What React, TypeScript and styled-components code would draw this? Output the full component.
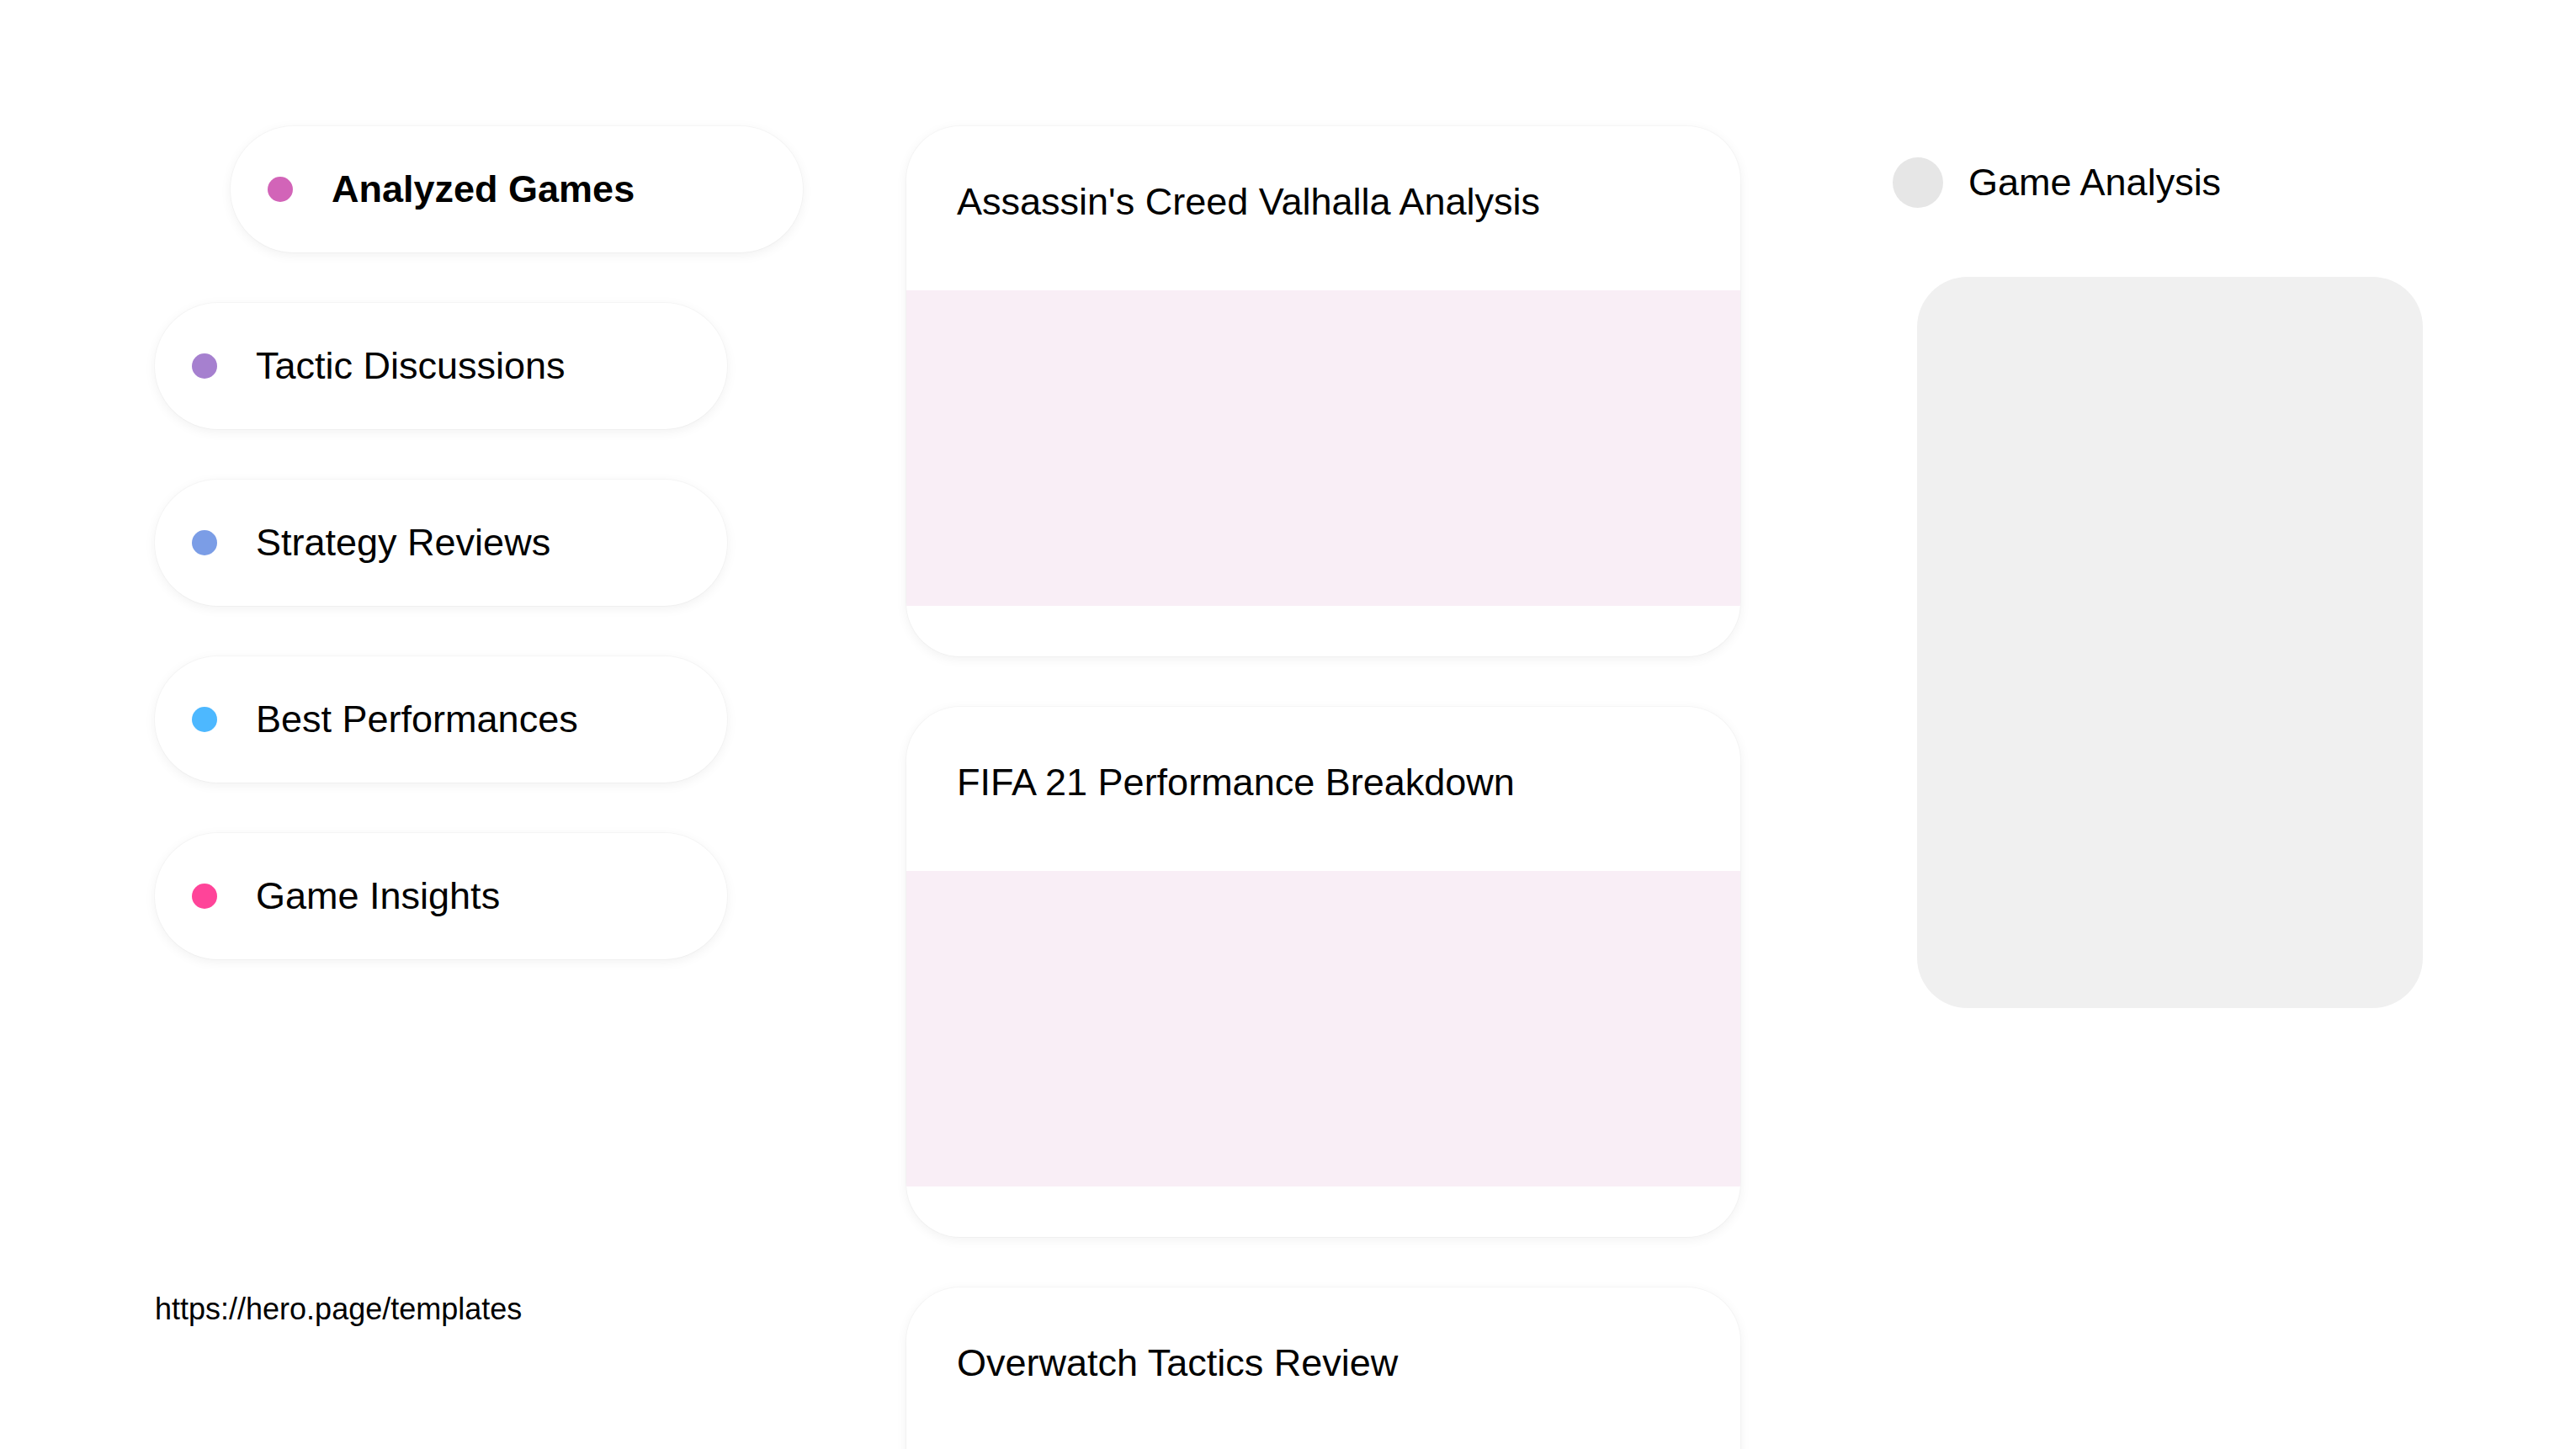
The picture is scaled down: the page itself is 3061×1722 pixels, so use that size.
import React from 'react';
import styled, { createGlobalStyle } from 'styled-components';

const GlobalStyle = createGlobalStyle`
    html, body {
        margin: 0;
        padding: 0;
        background: #ffffff;
        overflow: hidden;
    }
    body {
        font-family: 'Liberation Sans', Arial, sans-serif;
        color: #000;
    }
`;

interface NavItem {
    label: string;
    color: string;
    active?: boolean;
}

const navItems: Array<NavItem> = [
    { label: 'Analyzed Games', color: '#d264b8', active: true },
    { label: 'Tactic Discussions', color: '#a680cf' },
    { label: 'Strategy Reviews', color: '#7b9de6' },
    { label: 'Best Performances', color: '#4db8ff' },
    { label: 'Game Insights', color: '#ff4499' },
];

const cards = ['Assassin\'s Creed Valhalla Analysis', 'FIFA 21 Performance Breakdown', 'Overwatch Tactics Review'];

const Page = styled.div`
    width: 3061px;
    height: 1722px;
    display: flex;
    align-items: flex-start;
    padding: 150px 0 0 184px;
    box-sizing: border-box;
    overflow: hidden;
`;

const LeftColumn = styled.nav`
    width: 680px;
    margin-right: 213px;
    display: flex;
    flex-direction: column;
    gap: 60px;
`;

const Pill = styled.div<{ active?: boolean }>`
    height: 150px;
    width: 680px;
    box-sizing: border-box;
    margin-left: ${({ active }) => (active ? '90px' : '0')};
    display: flex;
    align-items: center;
    gap: 46px;
    padding-left: 44px;
    background: #fff;
    border-radius: 75px;
    box-shadow: 0 3px 14px rgba(0, 0, 0, 0.06), 0 0 0 1px rgba(0, 0, 0, 0.025);
    font-size: 45px;
    font-weight: ${({ active }) => (active ? 700 : 400)};
`;

const Dot = styled.span<{ color: string }>`
    width: 30px;
    height: 30px;
    border-radius: 50%;
    flex-shrink: 0;
    background: ${({ color }) => color};
`;

const FooterLink = styled.div`
    margin-top: 335px;
    font-size: 36px;
`;

const MiddleColumn = styled.main`
    width: 991px;
    margin-right: 181px;
    display: flex;
    flex-direction: column;
    gap: 60px;
`;

const Card = styled.article`
    height: 630px;
    flex-shrink: 0;
    display: flex;
    flex-direction: column;
    background: #fff;
    border-radius: 64px;
    overflow: hidden;
    box-shadow: 0 3px 14px rgba(0, 0, 0, 0.06), 0 0 0 1px rgba(0, 0, 0, 0.025);
`;

const CardHeader = styled.div`
    height: 195px;
    box-sizing: border-box;
    padding: 64px 60px 0;
    font-size: 45px;
`;

const CardMedia = styled.div`
    height: 375px;
    background: #f9eef6;
`;

const RightColumn = styled.aside`
    width: 630px;
    padding-top: 37px;
    display: flex;
    flex-direction: column;
`;

const PanelHeader = styled.div`
    display: flex;
    align-items: center;
    gap: 30px;
    font-size: 45px;
`;

const Avatar = styled.span`
    width: 60px;
    height: 60px;
    border-radius: 50%;
    background: #e6e6e6;
`;

const PanelBox = styled.div`
    margin: 82px 0 0 29px;
    width: 601px;
    height: 869px;
    border-radius: 60px;
    background: #f0f0f0;
`;

const App: React.FC = () => {
    return (
        <>
            <GlobalStyle />
            <Page>
                <LeftColumn>
                    {navItems.map((item) => (
                        <Pill key={item.label} active={item.active}>
                            <Dot color={item.color} />
                            {item.label}
                        </Pill>
                    ))}
                    <FooterLink>https://hero.page/templates</FooterLink>
                </LeftColumn>
                <MiddleColumn>
                    {cards.map((title) => (
                        <Card key={title}>
                            <CardHeader>{title}</CardHeader>
                            <CardMedia />
                        </Card>
                    ))}
                </MiddleColumn>
                <RightColumn>
                    <PanelHeader>
                        <Avatar />
                        Game Analysis
                    </PanelHeader>
                    <PanelBox />
                </RightColumn>
            </Page>
        </>
    );
};

export default App;
